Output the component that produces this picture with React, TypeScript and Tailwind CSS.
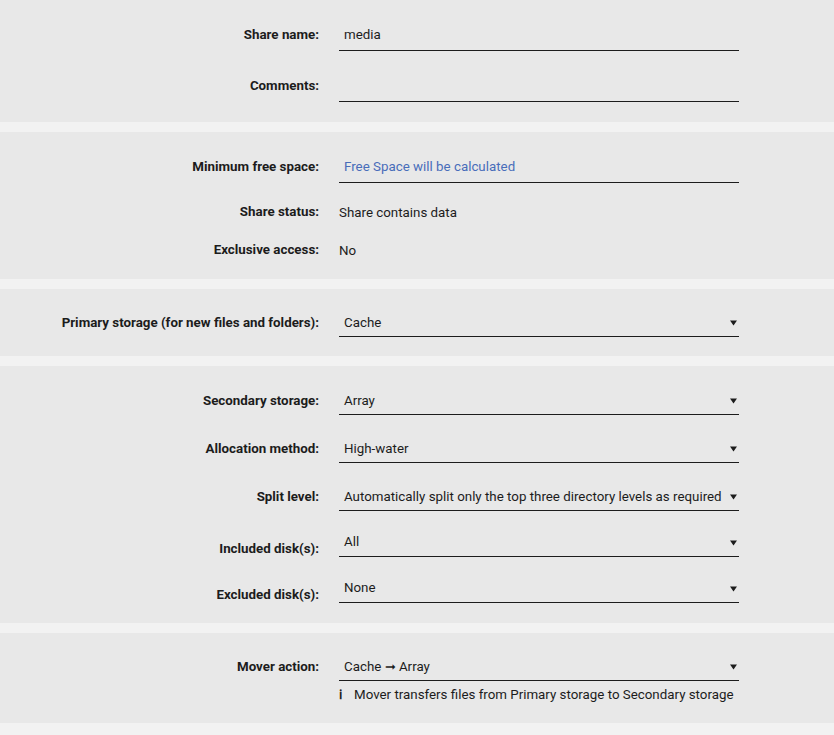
import type { ReactNode } from 'react';

const Caret = () => (
  <svg width="7" height="7" viewBox="0 0 7 7" className="shrink-0 fill-[#1c1c1c]">
    <path d="M0 1.5h7L3.5 6.5z" />
  </svg>
);

const Section = ({ children, className = '' }: { children: ReactNode; className?: string }) => (
  <div className={`bg-[#e8e8e8] flex flex-col ${className}`}>{children}</div>
);

const Row = ({
  label,
  children,
  className = '',
  labelClass = '',
}: {
  label: string;
  children: ReactNode;
  className?: string;
  labelClass?: string;
}) => (
  <div className={`flex items-center ${className}`}>
    <div
      className={`w-[319px] shrink-0 text-right font-bold text-[13.33px] leading-4 text-[#1c1c1c] ${labelClass}`}
    >
      {label}
    </div>
    <div className="ml-5 w-[400px]">{children}</div>
  </div>
);

const Field = ({ value, muted, select }: { value?: string; muted?: boolean; select?: boolean }) => (
  <div
    className={`h-8 flex items-center justify-between border-b border-[#1c1c1c] pl-[5px] pr-[2px] ${
      select ? 'pt-[4px]' : ''
    }`}
  >
    <span className={`text-[13.33px] ${muted ? 'text-[#486dba]' : 'text-[#1c1c1c]'}`}>{value}</span>
    {select && <Caret />}
  </div>
);

const MultiField = ({ value }: { value: string }) => (
  <div className="h-8 flex justify-between border-b border-[#1c1c1c] pl-[5px] pr-[2px] pt-[10px]">
    <span className="text-[13.33px] leading-[14px] text-[#1c1c1c]">{value}</span>
    <span className="mt-[4px]">
      <Caret />
    </span>
  </div>
);

export default function App() {
  return (
    <div
      className="min-h-[735px] w-[834px] bg-[#f2f2f2] flex flex-col gap-[10px] text-[#1c1c1c]"
      style={{ fontFamily: 'Roboto, "Noto Sans", sans-serif' }}
    >
      <Section className="pt-[19px] pb-5 gap-[19px]">
        <Row label="Share name:">
          <Field value="media" />
        </Row>
        <Row label="Comments:">
          <Field />
        </Row>
      </Section>

      <Section className="pt-[19px] pb-[19px]">
        <Row label="Minimum free space:">
          <Field value="Free Space will be calculated" muted />
        </Row>
        <Row label="Share status:" className="h-5 mt-[19px]">
          <span className="text-[13.33px]">Share contains data</span>
        </Row>
        <Row label="Exclusive access:" className="h-5 mt-[18px]">
          <span className="text-[13.33px]">No</span>
        </Row>
      </Section>

      <Section className="pt-4 pb-[19px]">
        <Row label="Primary storage (for new files and folders):" labelClass="pt-[4px]">
          <Field value="Cache" select />
        </Row>
      </Section>

      <Section className="pt-[17px] pb-5">
        <Row label="Secondary storage:" labelClass="pt-[4px]">
          <Field value="Array" select />
        </Row>
        <Row label="Allocation method:" className="mt-4" labelClass="pt-[4px]">
          <Field value="High-water" select />
        </Row>
        <Row label="Split level:" className="mt-4" labelClass="pt-[4px]">
          <Field value="Automatically split only the top three directory levels as required" select />
        </Row>
        <Row label="Included disk(s):" className="mt-[14px]" labelClass="pt-[16px]">
          <MultiField value="All" />
        </Row>
        <Row label="Excluded disk(s):" className="mt-[14px]" labelClass="pt-[16px]">
          <MultiField value="None" />
        </Row>
      </Section>

      <Section className="pt-4 pb-5">
        <Row label="Mover action:" labelClass="pt-[4px]">
          <Field value="Cache ➞ Array" select />
        </Row>
        <div className="flex items-center ml-[339px] mt-[6px] text-[13.33px] leading-4">
          <span className="w-[15px] font-bold font-serif text-[13px]">ℹ</span>
          <span>Mover transfers files from Primary storage to Secondary storage</span>
        </div>
      </Section>
    </div>
  );
}
